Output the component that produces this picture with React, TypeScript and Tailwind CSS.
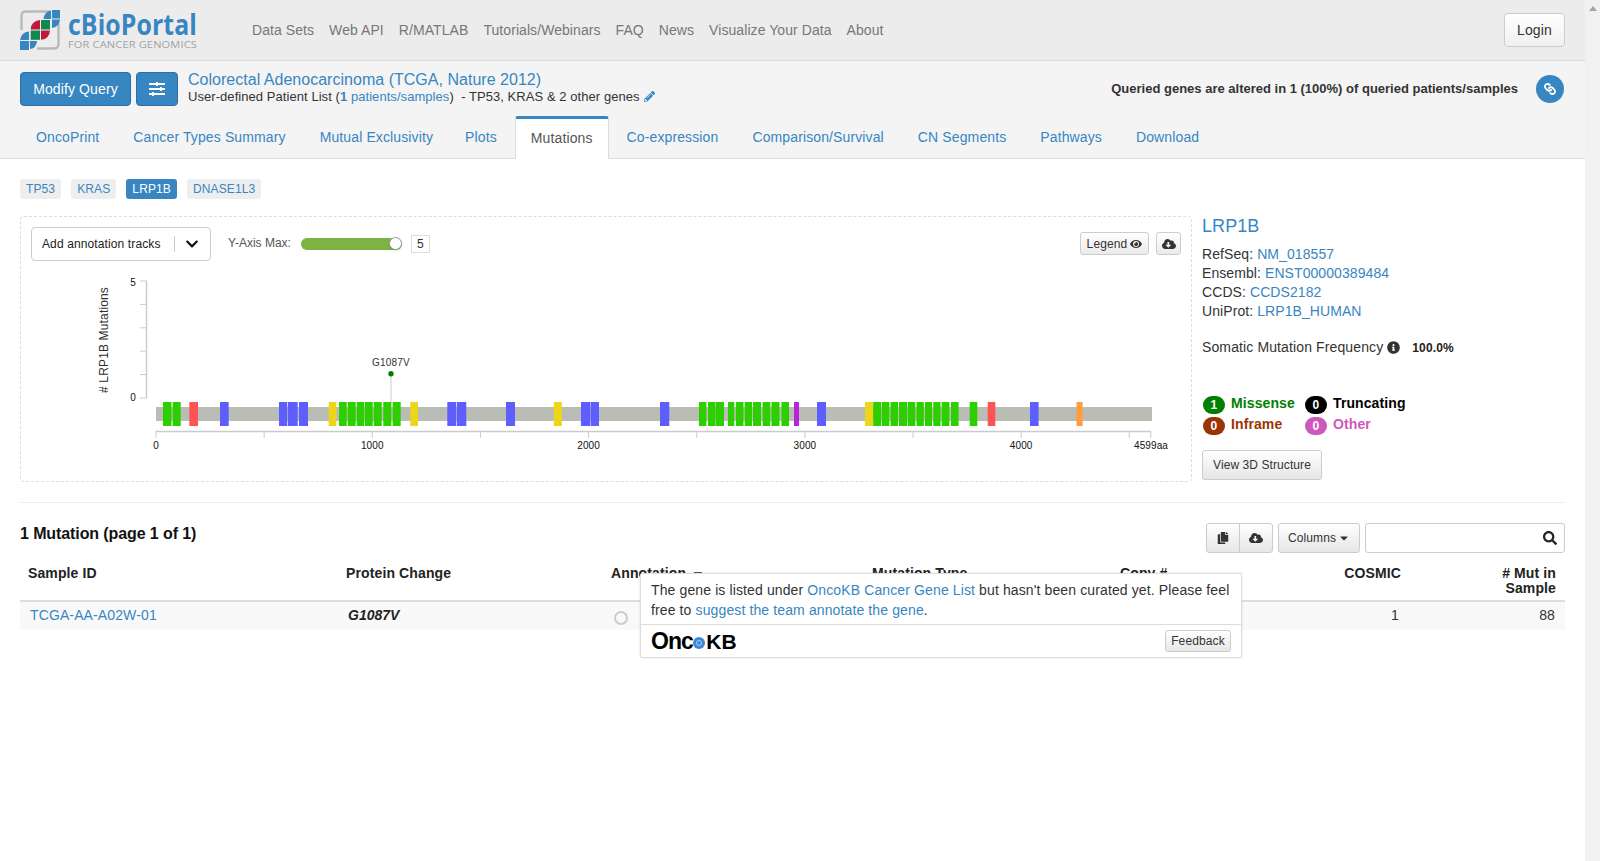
import React from "react";
import { FaSlidersH, FaChevronDown, FaEye, FaCloudDownloadAlt, FaCopy, FaSearch, FaInfoCircle, FaPencilAlt, FaLink, FaCaretDown } from "react-icons/fa";

const nav = ["Data Sets", "Web API", "R/MATLAB", "Tutorials/Webinars", "FAQ", "News", "Visualize Your Data", "About"];
const tabs = ["OncoPrint", "Cancer Types Summary", "Mutual Exclusivity", "Plots", "Mutations", "Co-expression", "Comparison/Survival", "CN Segments", "Pathways", "Download"];

const G = "#2dcf00", B = "#5e5eff", Y = "#eed51a", R = "#ff5353", P = "#b825d8", O = "#ff9e3d";
const domains: [number, number, string][] = [
  [163, 171.5, G], [172.7, 180.7, G], [189.3, 198, R], [220, 228.7, B], [279, 287.3, B], [288, 297.7, B], [299, 308, B],
  [328.7, 336.3, Y], [339, 346.7, G], [347.7, 355.7, G], [356.7, 364.3, G], [365, 372.7, G], [373.7, 381.7, G], [383.3, 391.3, G], [392.7, 400.7, G],
  [410.3, 418, Y], [447.3, 456.3, B], [457, 466.3, B], [506, 515, B], [553.8, 561.8, Y], [581, 590, B], [590.5, 599, B],
  [660, 669.3, B], [699, 706.4, G], [708, 715.6, G], [716, 724, G], [728, 734.3, G], [735.9, 743.5, G], [744.7, 752, G], [753, 761, G], [762.6, 770.3, G], [771.4, 779.5, G], [781.4, 789, G],
  [794, 799, P], [817, 826, B], [865, 873, Y], [873.2, 881.3, G], [882, 889.3, G], [890.5, 898, G], [899, 907, G], [907.7, 915.3, G], [916.5, 923.8, G], [925, 932, G], [933.3, 940.6, G], [941.7, 949.4, G], [951, 958.6, G],
  [969.7, 977.3, G], [987.7, 995.3, R], [1030, 1038.6, B], [1076.5, 1082.6, O],
];

function LollipopPlot() {
  const ox = 31, oy = 270;
  const x = (v: number) => v - ox;
  const y = (v: number) => v - oy;
  const xTicks = [0, 500, 1000, 1500, 2000, 2500, 3000, 3500, 4000, 4500, 4599];
  const aa = (v: number) => 156 + (v * 216.3) / 1000;
  return (
    <svg width={1150} height={180} className="block" style={{ fontFamily: '"Liberation Sans", sans-serif' }}>
      <text transform={`translate(${x(104.5)},${y(340)}) rotate(-90)`} textAnchor="middle" fontSize={12} fill="#2f2f2f" dominantBaseline="middle" textLength={106}>
        # LRP1B Mutations
      </text>
      <line x1={x(146.5)} x2={x(146.5)} y1={y(281)} y2={y(398)} stroke="#ccc" strokeWidth={1.5} />
      {[281, 304.4, 327.8, 351.2, 374.6, 398].map((t) => (
        <line key={t} x1={x(140)} x2={x(147)} y1={y(t)} y2={y(t)} stroke="#ccc" strokeWidth={1} />
      ))}
      <text x={x(136)} y={y(285.5)} fontSize={10} textAnchor="end" fill="#111">5</text>
      <text x={x(136)} y={y(400.5)} fontSize={10} textAnchor="end" fill="#111">0</text>
      <line x1={x(391)} x2={x(391)} y1={y(374)} y2={y(403)} stroke="#ccc" strokeWidth={1} />
      <circle cx={x(391)} cy={y(373.7)} r={2.7} fill="#008000" />
      <text x={x(391)} y={y(366)} fontSize={10} textAnchor="middle" fill="#333" letterSpacing={0.2}>G1087V</text>
      <rect x={x(156)} y={y(407)} width={996} height={14} fill="#babdb6" />
      {domains.map(([a, b, c]) => (
        <rect key={a} x={x(a)} y={y(402)} width={b - a} height={24} fill={c} />
      ))}
      <line x1={x(156)} x2={x(1151)} y1={y(431.5)} y2={y(431.5)} stroke="#ccc" strokeWidth={1.5} />
      {xTicks.map((t) => (
        <line key={t} x1={x(aa(t))} x2={x(aa(t))} y1={y(431)} y2={y(438)} stroke="#ccc" strokeWidth={1} />
      ))}
      {[0, 1000, 2000, 3000, 4000].map((t) => (
        <text key={t} x={x(aa(t))} y={y(449)} fontSize={10} textAnchor="middle" fill="#111">{t}</text>
      ))}
      <text x={x(1151)} y={y(449)} fontSize={10} textAnchor="middle" fill="#111">4599aa</text>
    </svg>
  );
}

function Logo() {
  return (
    <svg width={180} height={42} className="block mt-[2px] overflow-visible" style={{ fontFamily: '"Open Sans", "Liberation Sans", sans-serif' }}>
      <path d="M30 1.5 H6 Q1.5 1.5 1.5 6 V20 M38.5 14 V34 Q38.5 38.5 34 38.5 H17" fill="none" stroke="#b9b9b9" strokeWidth={2.4} />
      <rect x="32" y="0" width="8" height="8.5" fill="#3786c2" />
      <path d="M23.5 9 Q24 2 31 0.5 V9 Z" fill="#3786c2" />
      <path d="M32 9.5 H40 Q39.5 17 32 18 Z" fill="#3786c2" />
      <rect x="0" y="31" width="9" height="9" fill="#3786c2" />
      <path d="M0 30 Q1 22 9 21.5 V30 Z" fill="#3786c2" />
      <path d="M10 31 H17 Q16.5 38 10 39 Z" fill="#3786c2" />
      <path d="M10.7 19.5 Q11 11 20 10 V19.5 Z" fill="#c3183c" />
      <rect x="21" y="10" width="9" height="9.5" fill="#0f8a4d" />
      <rect x="10.7" y="20.5" width="9.3" height="9.3" fill="#0f8a4d" />
      <path d="M21 20.5 H30 Q29.5 29 21 29.8 Z" fill="#c3183c" />
      <text x="48" y="25" fontSize={29} fontWeight={700} fill="#3786c2" textLength={129} lengthAdjust="spacingAndGlyphs">cBioPortal</text>
      <text x="48" y="38" fontSize={9.5} fill="#a3a3a3" textLength={129} lengthAdjust="spacingAndGlyphs">FOR CANCER GENOMICS</text>
    </svg>
  );
}

function Badge({ n, label, bg, tc }: { n: number; label: string; bg: string; tc: string }) {
  return (
    <div className="flex items-start w-[102px] h-[21px]">
      <span className="w-[22px] h-[18px] rounded-full text-white flex items-center justify-center text-[12px] font-bold mt-[1px]" style={{ background: bg }}>{n}</span>
      <span className="ml-[6px] text-[14px] font-bold leading-[16px] tracking-[0.1px]" style={{ color: tc }}>{label}</span>
    </div>
  );
}

const link = "text-[#3786c2]";
const btnGrad = "bg-gradient-to-b from-white to-[#e6e6e6] border border-[#ccc]";
const cols = "grid-cols-[318px_265px_261px_248px_138px_160px_155px]";

export default function App() {
  return (
    <div className="flex h-[861px] overflow-hidden bg-white text-[14px] text-[#333] tracking-[0.12px]" style={{ fontFamily: '"Liberation Sans", Arial, sans-serif' }}>
      <div className="relative w-[1585px] shrink-0">
        <header className="h-[61px] bg-[#ececec] border-b border-[#dcdcdc] flex items-center pl-[20px] pr-[20px]">
          <Logo />
          <nav className="flex ml-[44.5px] text-[#777] tracking-[0.07px]">
            {nav.map((n) => (
              <span key={n} className="px-[7.5px]">{n}</span>
            ))}
          </nav>
          <button className="ml-auto w-[61px] h-[34px] rounded bg-gradient-to-b from-white to-[#f0f0f0] border border-[#ccc] text-[#333] text-[14px]">Login</button>
        </header>

        <section className="h-[98px] bg-[#f4f4f4] border-b border-[#ddd] flex flex-col">
          <div className="h-[55px] flex pl-[20px] pr-[21px] pt-[11px]">
            <button className="w-[111px] h-[34px] rounded bg-[#3786c2] border border-[#2e6da4] text-white">Modify Query</button>
            <button className="ml-[5px] w-[42px] h-[34px] rounded bg-[#3786c2] border border-[#2e6da4] text-white flex items-center justify-center">
              <FaSlidersH className="text-[16px]" />
            </button>
            <div className="ml-[10px] -mt-[1px]">
              <div className={`${link} text-[16px] leading-[18px] tracking-[0.02px]`}>Colorectal Adenocarcinoma (TCGA, Nature 2012)</div>
              <div className="text-[13px] leading-[15px] flex items-center whitespace-pre tracking-[0.06px]">
                User-defined Patient List (<span className={link}><b className="font-bold">1</b> patients/samples</span>)  - TP53, KRAS &amp; 2 other genes <FaPencilAlt className={`${link} text-[11px] ml-[1px]`} />
              </div>
            </div>
            <div className="ml-auto flex items-start">
              <span className="text-[13px] font-bold mt-[9px] leading-[15px] tracking-normal">Queried genes are altered in 1 (100%) of queried patients/samples</span>
              <span className="ml-[18px] mt-[3px] w-[28px] h-[28px] rounded-full bg-[#3786c2] text-white flex items-center justify-center">
                <FaLink className="text-[12px] rotate-90" />
              </span>
            </div>
          </div>
          <div className="flex h-[42px] pl-[20px]">
            {tabs.map((t) =>
              t === "Mutations" ? (
                <div key={t} className="h-[43px] px-[15px] mr-[2px] bg-white border-x border-[#ddd] border-t-[3px] border-t-[#3786c2] rounded-t-[3px] text-[#555] flex items-center pb-[1px]">{t}</div>
              ) : (
                <div key={t} className={`${link} px-[16px] ${t === "Mutual Exclusivity" ? "" : "mr-[2px]"} flex items-center`}>{t}</div>
              )
            )}
          </div>
        </section>

        <main className="px-[20px]">
          <div className="flex gap-[10px] pt-[20px] text-[12px]">
            {["TP53", "KRAS", "LRP1B", "DNASE1L3"].map((g) => (
              <span key={g} className={`h-[20px] px-[6px] rounded-[3px] flex items-center ${g === "LRP1B" ? "bg-[#3786c2] text-white" : `bg-[#eee] ${link}`}`}>{g}</span>
            ))}
          </div>

          <div className="flex mt-[17px]">
            <div className="relative w-[1172px] h-[266px] border border-dashed border-[#ddd] rounded">
              <div className="flex items-start pl-[10px] pr-[10px] pt-[10px]">
                <div className="w-[180px] h-[34px] border border-[#ccc] rounded flex items-center pl-[10px] text-[12px] text-[#222]">
                  <span className="w-[132px] whitespace-nowrap">Add annotation tracks</span>
                  <span className="w-px h-[16px] bg-[#ccc]" />
                  <FaChevronDown className="ml-[10px] text-[14px] text-[#111]" />
                </div>
                <span className="ml-[17px] mt-[9px] text-[12px] leading-[14px] text-[#555] tracking-normal">Y-Axis Max:</span>
                <div className="relative ml-[10px] mt-[11px] w-[101px] h-[12px] rounded-full bg-[#7cb342]">
                  <span className="absolute right-0 -top-[1px] w-[13px] h-[13px] rounded-full bg-white border border-[#999] shadow" />
                </div>
                <span className="ml-[9px] mt-[8px] w-[19px] h-[18px] border border-[#ddd] text-[12px] text-[#333] flex items-center justify-center">5</span>
                <button className="ml-auto mt-[5px] w-[69px] h-[23px] rounded-[3px] bg-gradient-to-b from-white to-[#ebebeb] border border-[#ccc] text-[12px] flex items-center justify-center gap-[3px]">
                  Legend <FaEye className="text-[12px]" />
                </button>
                <button className="ml-[7px] mt-[5px] w-[25px] h-[23px] rounded-[3px] bg-gradient-to-b from-white to-[#ebebeb] border border-[#ccc] flex items-center justify-center">
                  <FaCloudDownloadAlt className="text-[14px]" />
                </button>
              </div>
              <div className="mt-[9px] ml-[10px]"><LollipopPlot /></div>
            </div>

            <aside className="ml-[10px] flex-1 tracking-[0.08px]">
              <div className={`${link} text-[18px] leading-[20px]`}>LRP1B</div>
              <div className="mt-[9px] leading-[19px]">
                <div>RefSeq: <span className={link}>NM_018557</span></div>
                <div>Ensembl: <span className={link}>ENST00000389484</span></div>
                <div>CCDS: <span className={link}>CCDS2182</span></div>
                <div>UniProt: <span className={link}>LRP1B_HUMAN</span></div>
              </div>
              <div className="mt-[17px] flex items-center h-[19px] whitespace-pre tracking-[0.12px]">
                Somatic Mutation Frequency<FaInfoCircle className="ml-[4px] text-[13px]" />
                <b className="ml-[12px] text-[12px] text-[#222]">100.0%</b>
              </div>
              <div className="mt-[38px] flex flex-wrap w-[210px] ml-[1px]">
                <Badge n={1} label="Missense" bg="#008000" tc="#008000" />
                <Badge n={0} label="Truncating" bg="#000" tc="#000" />
                <Badge n={0} label="Inframe" bg="#993404" tc="#993404" />
                <Badge n={0} label="Other" bg="#cf58bc" tc="#cf58bc" />
              </div>
              <button className={`mt-[13px] w-[120px] h-[30px] rounded-[3px] ${btnGrad} text-[12px]`}>View 3D Structure</button>
            </aside>
          </div>

          <div className="mt-[20px] border-t border-[#eee]" />

          <div className="flex items-start mt-[20px] h-[31px]">
            <h2 className="text-[16px] font-bold text-[#111] leading-[22px] tracking-[-0.1px]">1 Mutation (page 1 of 1)</h2>
            <div className="ml-auto flex items-center text-[12px]">
              <button className={`w-[34px] h-[30px] rounded-l-[3px] ${btnGrad} flex items-center justify-center`}><FaCopy className="text-[12px]" /></button>
              <button className={`w-[34px] h-[30px] -ml-px rounded-r-[3px] ${btnGrad} flex items-center justify-center`}><FaCloudDownloadAlt className="text-[14px]" /></button>
              <button className={`ml-[5px] w-[82px] h-[30px] rounded-[3px] ${btnGrad} flex items-center justify-center gap-[2px]`}>Columns <FaCaretDown className="text-[12px]" /></button>
              <div className="ml-[5px] w-[200px] h-[30px] border border-[#ccc] rounded-[3px] bg-white flex items-center justify-end pr-[7px]"><FaSearch className="text-[14px] text-[#222]" /></div>
            </div>
          </div>

          <div className={`grid ${cols} mt-[6px] border-b-2 border-[#ddd] h-[42px] font-bold text-[#222] leading-[15px] pt-[6px]`}>
            <div className="pl-[8px]">Sample ID</div>
            <div className="pl-[8px]">Protein Change</div>
            <div className="pl-[8px] flex items-start">Annotation <FaCaretDown className="ml-[5px] mt-[1px]" /></div>
            <div className="pl-[8px]">Mutation Type</div>
            <div className="pl-[8px]">Copy #</div>
            <div className="text-right pr-[9px]">COSMIC</div>
            <div className="text-right pr-[9px]">
              # Mut in<br />Sample
            </div>
          </div>
          <div className={`grid ${cols} h-[28px] bg-[#f9f9f9] items-center pb-[2px]`}>
            <div className={`pl-[10px] ${link}`}>TCGA-AA-A02W-01</div>
            <div className="pl-[10px] font-bold italic text-[#222] tracking-normal">G1087V</div>
            <div className="pl-[11px]"><span className="block w-[14px] h-[14px] rounded-full border-2 border-[#ccc] mt-[6px]" /></div>
            <div />
            <div />
            <div className="text-right pr-[11px]">1</div>
            <div className="text-right pr-[10px]">88</div>
          </div>
        </main>

        <div className="absolute left-[640px] top-[573px] w-[602px] h-[85px] bg-white border border-[#ddd] shadow-[0_0_2px_rgba(0,0,0,0.15)] rounded-[2px]">
          <div className="h-[51px] px-[10px] pt-[6px] text-[14px] leading-[20px] text-[#333] whitespace-nowrap border-b border-[#ddd]">
            The gene is listed under <span className={link}>OncoKB Cancer Gene List</span> but hasn't been curated yet. Please feel<br />
            free to <span className={link}>suggest the team annotate the gene</span>.
          </div>
          <div className="flex items-center px-[10px] h-[32px]">
            <span className="text-[23px] font-bold text-black flex items-center leading-none tracking-[-1px]">
              Onc
              <span className="inline-block w-[12px] h-[12px] rounded-full bg-[#3b8ad9] ml-[0.5px] mr-[1px] mt-[3px] relative"><span className="absolute inset-[3px] rounded-full border border-[#a8d0f5]" /></span>
              <span className="text-[21px] tracking-normal">KB</span>
            </span>
            <button className={`ml-auto w-[66px] h-[22px] rounded-[3px] ${btnGrad} text-[12px]`}>Feedback</button>
          </div>
        </div>
      </div>

      <div className="w-[15px] shrink-0 bg-[#f1f1f1] flex flex-col items-center pt-[6px]">
        <span className="w-0 h-0 border-x-[4px] border-x-transparent border-b-[5px] border-b-[#a3a3a3]" />
      </div>
    </div>
  );
}
